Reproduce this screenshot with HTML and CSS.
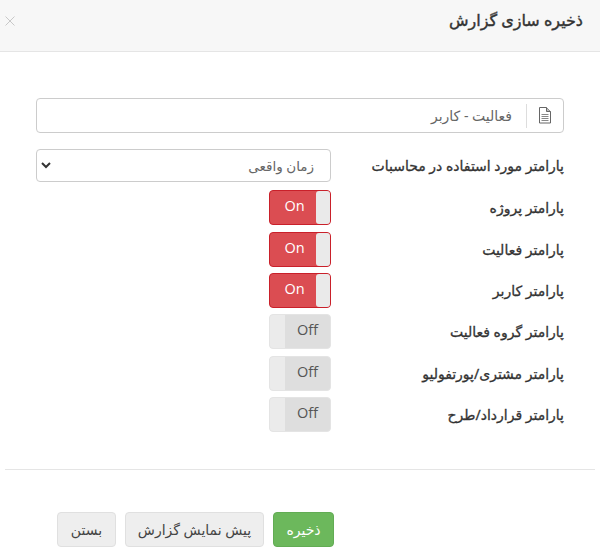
FILE: index.html
```html
<!DOCTYPE html>
<html lang="fa" dir="rtl">
<head>
<meta charset="utf-8">
<title>ذخیره سازی گزارش</title>
<link rel="stylesheet" href="styles.css">
</head>
<body>
<div class="modal">
  <header class="modal-header">
    <h4 class="modal-title">ذخیره سازی گزارش</h4>
    <svg class="close" width="10" height="10" viewBox="0 0 10 10" fill="none" stroke="#c8c8c8" stroke-width="1"><path d="M.5 .5l9 9M9.500 .5l-9 9"/></svg>
  </header>
  <main class="modal-body">
    <div class="name-input">
      <span class="name-icon">
        <svg width="14" height="17" viewBox="0 0 14 17" fill="none" stroke="#666" stroke-width="1">
          <path d="M1.5 .5h7l4 4v11.5h-11z"/>
          <path d="M8.5 .5v4h4" fill="#bbb"/>
          <path d="M3.500 7.500h7M3.500 9.500h7M3.500 11.500h7M3.500 13.500h7" stroke="#888"/>
        </svg>
      </span>
      <span class="name-value">فعالیت - کاربر</span>
    </div>
    <div class="rows">
      <div class="row row-select">
        <label class="row-label">پارامتر مورد استفاده در محاسبات</label>
        <div class="select">
          <span>زمان واقعی</span>
          <svg width="10" height="7" viewBox="0 0 10 7" fill="none" stroke="#333" stroke-width="2"><path d="M1 1l4 4 4-4"/></svg>
        </div>
      </div>
      <div class="row">
        <label class="row-label">پارامتر پروژه</label>
        <div class="toggle on"><span class="toggle-text">On</span><span class="handle"></span></div>
      </div>
      <div class="row">
        <label class="row-label">پارامتر فعالیت</label>
        <div class="toggle on"><span class="toggle-text">On</span><span class="handle"></span></div>
      </div>
      <div class="row">
        <label class="row-label">پارامتر کاربر</label>
        <div class="toggle on"><span class="toggle-text">On</span><span class="handle"></span></div>
      </div>
      <div class="row">
        <label class="row-label">پارامتر گروه فعالیت</label>
        <div class="toggle off"><span class="handle"></span><span class="toggle-text">Off</span></div>
      </div>
      <div class="row">
        <label class="row-label">پارامتر مشتری/پورتفولیو</label>
        <div class="toggle off"><span class="handle"></span><span class="toggle-text">Off</span></div>
      </div>
      <div class="row">
        <label class="row-label">پارامتر قرارداد/طرح</label>
        <div class="toggle off"><span class="handle"></span><span class="toggle-text">Off</span></div>
      </div>
    </div>
  </main>
  <footer class="modal-footer">
    <button class="btn btn-save">ذخیره</button>
    <button class="btn btn-preview">پیش نمایش گزارش</button>
    <button class="btn btn-close">بستن</button>
  </footer>
</div>
</body>
</html>
```
FILE: styles.css
```css
* { box-sizing: border-box; }
html, body { margin: 0; padding: 0; background: #fff; }
body {
  width: 600px;
  height: 553px;
  overflow: hidden;
  font-family: "Noto Sans", "DejaVu Sans", sans-serif;
  font-size: 14px;
  color: #333;
}
.modal-header {
  height: 52px;
  background: #f7f7f7;
  border-bottom: 1px solid #e5e5e5;
  display: flex;
  justify-content: space-between;
  align-items: center;
  padding: 0 17px 11px 5px;
}
.modal-title {
  margin: 0;
  font-size: 16px;
  font-weight: 400;
  -webkit-text-stroke: 0.4px #333;
  color: #333;
}
.close { flex: none; margin-top: 2px; }
.modal-body {
  margin: 0 5px;
  padding: 46px 31px 0;
  height: 418px;
  border-bottom: 1px solid #e5e5e5;
}
.name-input {
  height: 35px;
  border: 1px solid #ccc;
  border-radius: 4px;
  display: flex;
  align-items: center;
  padding: 0 11px;
}
.name-icon {
  display: flex;
  padding-left: 11px;
  margin-left: 14px;
  border-left: 1px solid #ddd;
  height: 24px;
  align-items: center;
}
.name-value { font-size: 14px; color: #666; }
.rows { margin-top: 16px; display: flex; flex-direction: column; }
.row {
  display: grid;
  grid-template-columns: 233px 295px;
  align-items: center;
  justify-items: start;
  height: 41.4px;
}
.row-select { height: 33px; margin-bottom: 5px; }
.row-label {
  font-size: 14px;
  font-weight: 400;
  -webkit-text-stroke: 0.3px #333;
  color: #333;
}
.select {
  width: 295px;
  height: 33px;
  border: 1px solid #ccc;
  border-radius: 4px;
  display: flex;
  justify-content: space-between;
  align-items: center;
  padding: 0 16px 0 4px;
  color: #666;
}
.select span { font-size: 13.5px; }
.toggle {
  width: 62px;
  height: 35px;
  border-radius: 4px;
  display: flex;
  direction: ltr;
  overflow: hidden;
  font-family: "Open Sans", sans-serif;
  font-size: 14.5px;
}
.toggle-text { flex: 1; text-align: center; line-height: 30px; }
.handle { width: 15px; background: #eaeaea; }
.toggle.on { background: #db4d52; border: 1px solid #c9202a; color: #fff; }
.toggle.on .toggle-text { padding-left: 3px; }
.toggle.on .handle { width: 14px; border-radius: 3px 0 0 3px; }
.toggle.off { background: #dedede; color: #555; border: 1px solid #e4e4e4; }
.toggle.off .handle { background: #ebebeb; }
.modal-footer {
  display: flex;
  gap: 9px;
  padding: 42px 0 0;
  padding-inline-start: 266px;
}
.btn {
  height: 35px;
  border: 1px solid #e0e0e0;
  border-radius: 4px;
  background: #eee;
  color: #444;
  font-family: inherit;
  font-size: 14px;
  padding: 0;
}
.btn-save { width: 61px; background: #6cb85c; border-color: #62ac54; color: #fff; }
.btn-preview { width: 139px; }
.btn-close { width: 59px; }
```
